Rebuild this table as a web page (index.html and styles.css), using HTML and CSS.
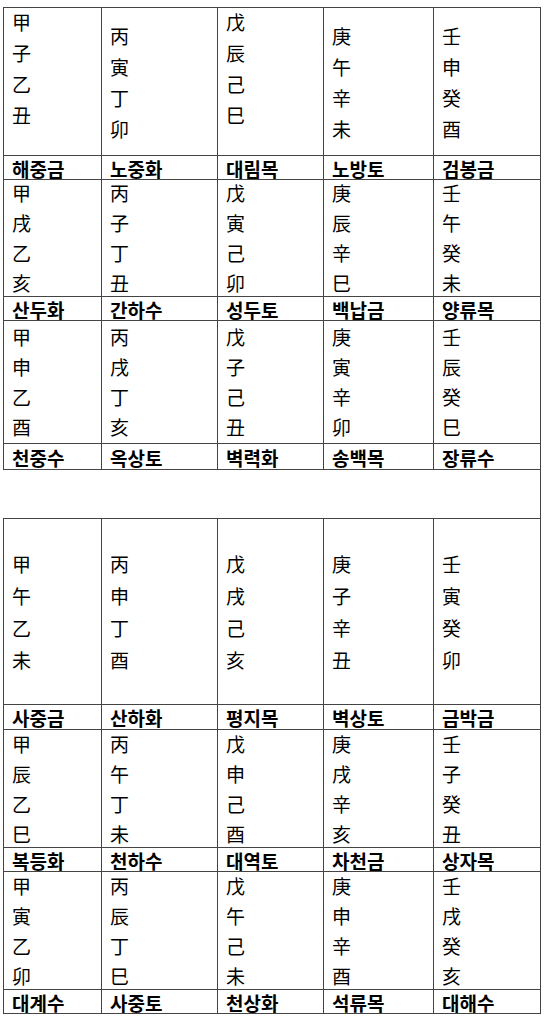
FILE: index.html
```html
<!DOCTYPE html>
<html lang="ko">
<head>
<meta charset="utf-8">
<title>납음오행</title>
<link rel="stylesheet" href="styles.css">
</head>
<body>
<div class="sheet">
  <div class="block block-a">
    <div class="cell data top"><div class="stack first shift">甲<br>子<br>乙<br>丑</div></div>
    <div class="cell data"><div class="stack first">丙<br>寅<br>丁<br>卯</div></div>
    <div class="cell data top"><div class="stack first shift">戊<br>辰<br>己<br>巳</div></div>
    <div class="cell data"><div class="stack first">庚<br>午<br>辛<br>未</div></div>
    <div class="cell data"><div class="stack first">壬<br>申<br>癸<br>酉</div></div>
    <div class="cell label">해중금</div>
    <div class="cell label">노중화</div>
    <div class="cell label">대림목</div>
    <div class="cell label">노방토</div>
    <div class="cell label">검봉금</div>

    <div class="cell data"><div class="stack">甲<br>戌<br>乙<br>亥</div></div>
    <div class="cell data"><div class="stack">丙<br>子<br>丁<br>丑</div></div>
    <div class="cell data"><div class="stack">戊<br>寅<br>己<br>卯</div></div>
    <div class="cell data"><div class="stack">庚<br>辰<br>辛<br>巳</div></div>
    <div class="cell data"><div class="stack">壬<br>午<br>癸<br>未</div></div>
    <div class="cell label">산두화</div>
    <div class="cell label">간하수</div>
    <div class="cell label">성두토</div>
    <div class="cell label">백납금</div>
    <div class="cell label">양류목</div>

    <div class="cell data"><div class="stack">甲<br>申<br>乙<br>酉</div></div>
    <div class="cell data"><div class="stack">丙<br>戌<br>丁<br>亥</div></div>
    <div class="cell data"><div class="stack">戊<br>子<br>己<br>丑</div></div>
    <div class="cell data"><div class="stack">庚<br>寅<br>辛<br>卯</div></div>
    <div class="cell data"><div class="stack">壬<br>辰<br>癸<br>巳</div></div>
    <div class="cell label">천중수</div>
    <div class="cell label">옥상토</div>
    <div class="cell label">벽력화</div>
    <div class="cell label">송백목</div>
    <div class="cell label">장류수</div>
  </div>

  <div class="spacer"></div>

  <div class="block block-b">
    <div class="cell data"><div class="stack wide">甲<br>午<br>乙<br>未</div></div>
    <div class="cell data"><div class="stack wide">丙<br>申<br>丁<br>酉</div></div>
    <div class="cell data"><div class="stack wide">戊<br>戌<br>己<br>亥</div></div>
    <div class="cell data"><div class="stack wide">庚<br>子<br>辛<br>丑</div></div>
    <div class="cell data"><div class="stack wide">壬<br>寅<br>癸<br>卯</div></div>
    <div class="cell label">사중금</div>
    <div class="cell label">산하화</div>
    <div class="cell label">평지목</div>
    <div class="cell label">벽상토</div>
    <div class="cell label">금박금</div>

    <div class="cell data"><div class="stack">甲<br>辰<br>乙<br>巳</div></div>
    <div class="cell data"><div class="stack">丙<br>午<br>丁<br>未</div></div>
    <div class="cell data"><div class="stack">戊<br>申<br>己<br>酉</div></div>
    <div class="cell data"><div class="stack">庚<br>戌<br>辛<br>亥</div></div>
    <div class="cell data"><div class="stack">壬<br>子<br>癸<br>丑</div></div>
    <div class="cell label">복등화</div>
    <div class="cell label">천하수</div>
    <div class="cell label">대역토</div>
    <div class="cell label">차천금</div>
    <div class="cell label">상자목</div>

    <div class="cell data"><div class="stack">甲<br>寅<br>乙<br>卯</div></div>
    <div class="cell data"><div class="stack">丙<br>辰<br>丁<br>巳</div></div>
    <div class="cell data"><div class="stack">戊<br>午<br>己<br>未</div></div>
    <div class="cell data"><div class="stack">庚<br>申<br>辛<br>酉</div></div>
    <div class="cell data"><div class="stack">壬<br>戌<br>癸<br>亥</div></div>
    <div class="cell label">대계수</div>
    <div class="cell label">사중토</div>
    <div class="cell label">천상화</div>
    <div class="cell label">석류목</div>
    <div class="cell label">대해수</div>
  </div>
</div>
</body>
</html>
```

FILE: styles.css
```css
html, body {
  margin: 0;
  padding: 0;
  background: #ffffff;
}

body {
  font-family: "Noto Sans CJK KR", "Noto Sans CJK SC", sans-serif;
  color: #000000;
}

.sheet {
  padding-top: 7px;
  padding-left: 3px;
}

.block {
  display: grid;
  grid-template-columns: 98px 116px 106px 110px 107px;
  width: 538px;
  box-sizing: border-box;
  border-left: 1px solid #444;
  border-top: 1px solid #444;
}

.block-a {
  grid-template-rows: 148px 24px 117px 24px 123px 26px;
}

.block-b {
  grid-template-rows: 186px 25px 118px 24px 118px 24px;
}

.cell {
  box-sizing: border-box;
  border-right: 1px solid #444;
  border-bottom: 1px solid #444;
  padding-left: 8px;
  min-height: 0;
}

.data {
  display: flex;
  flex-direction: column;
  justify-content: center;
  font-size: 19px;
  font-weight: 400;
}

.data.top {
  justify-content: flex-start;
}

.stack {
  line-height: 30px;
}

.stack.first {
  line-height: 31px;
}

.stack.shift {
  margin-top: -2px;
}

.stack.wide {
  line-height: 32px;
}

.label {
  display: flex;
  align-items: center;
  font-size: 19px;
  font-weight: 700;
  line-height: 1;
  padding-top: 1px;
}

.spacer {
  width: 538px;
  height: 48px;
  box-sizing: border-box;
  border-right: 1px solid #444;
}
```
